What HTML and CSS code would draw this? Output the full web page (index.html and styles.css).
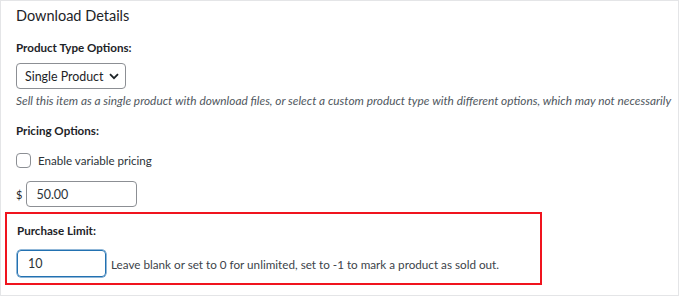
FILE: index.html
```html
<!DOCTYPE html>
<html lang="en">
<head>
<meta charset="utf-8">
<title>Download Details</title>
<link rel="stylesheet" href="styles.css">
</head>
<body>
<div class="panel">
  <h2 class="title">Download Details</h2>

  <div class="label">Product Type Options:</div>
  <div class="select">
    <span class="select-text">Single Product</span>
    <svg class="chevron" width="10" height="7" viewBox="0 0 10 7"><path d="M1 1.2 L5 5.2 L9 1.2" fill="none" stroke="#1d2327" stroke-width="1.8"/></svg>
  </div>
  <p class="desc">Sell this item as a single product with download files, or select a custom product type with different options, which may not necessarily</p>

  <div class="label label-pricing">Pricing Options:</div>
  <div class="check-row">
    <span class="checkbox"></span>
    <span class="check-text">Enable variable pricing</span>
  </div>
  <div class="price-row">
    <span class="currency">$</span>
    <div class="input input-price">50.00</div>
  </div>

  <div class="highlight">
    <div class="label label-limit">Purchase Limit:</div>
    <div class="limit-row">
      <div class="input input-limit">10</div>
      <span class="help">Leave blank or set to 0 for unlimited, set to -1 to mark a product as sold out.</span>
    </div>
  </div>
</div>
</body>
</html>
```
FILE: styles.css
```css
html, body {
  margin: 0;
  padding: 0;
  background: #ffffff;
}

body {
  font-family: Lato, "Open Sans", "Liberation Sans", sans-serif;
  color: #1d2327;
  font-size: 13px;
}

.panel {
  box-sizing: border-box;
  width: 679px;
  height: 296px;
  border: 1px solid #e4e5e7;
  padding: 5px 0 0 15px;
  overflow: hidden;
}

.title {
  margin: 0;
  font-size: 14.5px;
  font-weight: 400;
  line-height: 20px;
  color: #1d2327;
}

.label {
  font-weight: 700;
  font-size: 11.6px;
  line-height: 20px;
  color: #1d2327;
}

.title + .label {
  margin-top: 12px;
}

.select {
  box-sizing: border-box;
  margin-top: 5px;
  width: 110px;
  height: 26px;
  border: 1px solid #8c8f94;
  border-radius: 4px;
  display: flex;
  align-items: center;
  padding: 0 0 0 8px;
  gap: 6px;
  font-size: 12.4px;
  white-space: nowrap;
}

.chevron {
  flex: none;
}

.desc {
  margin: 3px 0 0;
  font-style: italic;
  font-size: 11.85px;
  line-height: 18px;
  color: #50575e;
  white-space: nowrap;
}

.label-pricing {
  margin-top: 11px;
}

.check-row {
  margin-top: 9px;
  display: flex;
  align-items: center;
  gap: 7px;
  height: 20px;
}

.checkbox {
  box-sizing: border-box;
  width: 15px;
  height: 15px;
  border: 1px solid #8c8f94;
  border-radius: 4px;
  flex: none;
}

.check-text {
  font-size: 11.6px;
  color: #2c3338;
}

.price-row {
  margin-top: 11px;
  display: flex;
  align-items: center;
  gap: 4px;
}

.currency {
  font-size: 11px;
  color: #1d2327;
}

.input {
  box-sizing: border-box;
  border: 1px solid #8c8f94;
  border-radius: 4px;
  display: flex;
  align-items: center;
  font-size: 12.5px;
  color: #2c3338;
}

.input-price {
  width: 111px;
  height: 26px;
  padding-left: 9px;
}

.highlight {
  box-sizing: border-box;
  margin: 5px 0 0 -11px;
  width: 537px;
  height: 73px;
  border: 2px solid #f0141e;
  padding: 7px 0 0 10px;
}

.limit-row {
  margin-top: 9px;
  display: flex;
  align-items: center;
  gap: 5px;
}

.input-limit {
  width: 89px;
  height: 27px;
  padding-left: 10px;
  border: 1.5px solid #2271b1;
  box-shadow: 0 0 0 0.5px #2271b1;
}

.help {
  font-size: 11.7px;
  color: #3c434a;
  white-space: nowrap;
}
```
